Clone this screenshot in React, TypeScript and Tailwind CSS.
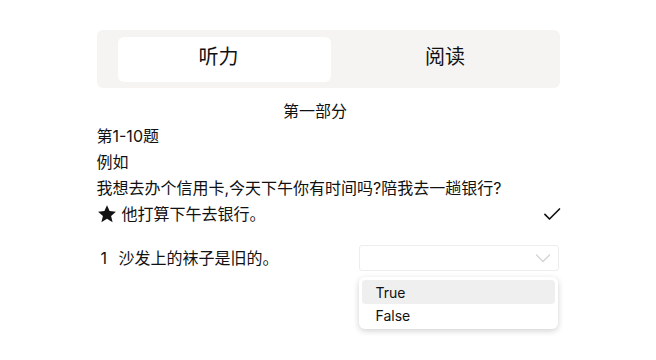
import React from "react";

const font = { fontFamily: 'Inter, "Noto Sans CJK SC", sans-serif' };

function StarIcon() {
  return (
    <svg width="20" height="20" viewBox="0 0 24 24" className="shrink-0">
      <path
        d="M12 1.5l3.1 7 7.6.7-5.8 5.1 1.8 7.5L12 17.8l-6.7 4 1.8-7.5-5.8-5.1 7.6-.7z"
        fill="#111"
      />
    </svg>
  );
}

function CheckIcon() {
  return (
    <svg width="20" height="20" viewBox="0 0 24 24" fill="none" stroke="#111" strokeWidth="2" strokeLinecap="round" strokeLinejoin="round">
      <path d="M3.5 12.5l5.5 5.5L21 6" />
    </svg>
  );
}

function Chevron() {
  return (
    <svg width="16" height="10" viewBox="0 0 16 10" fill="none" stroke="#d4d4d4" strokeWidth="1.4" strokeLinecap="round" strokeLinejoin="round">
      <path d="M1.5 2l6.5 6.5L14.5 2" />
    </svg>
  );
}

export default function App() {
  return (
    <div className="w-full min-h-[360px] bg-white text-[#111]" style={font}>
      <div className="mx-auto w-[463px] pt-[30px]">
        <div className="h-[58px] bg-[#f5f4f3] rounded-md pl-[21px] pt-[7px] pb-[6px] flex">
          <div className="w-[213px] bg-white rounded-md flex items-center justify-center text-[20px] pr-[11px] pb-[5px]">听力</div>
          <div className="flex-1 flex items-center justify-center text-[20px] pb-[5px]">阅读</div>
        </div>
        <div className="text-center text-[16px] leading-[20px] mt-[13px] pr-[26px]">第一部分</div>
        <div className="text-[16px] leading-[26px] mt-[2px]">
          <div>第1-10题</div>
          <div>例如</div>
          <div>我想去办个信用卡,今天下午你有时间吗?陪我去一趟银行?</div>
          <div className="flex items-center justify-between">
            <div className="flex items-center gap-[5px]">
              <StarIcon />
              <span>他打算下午去银行。</span>
            </div>
            <div className="mr-[-2px]"><CheckIcon /></div>
          </div>
        </div>
        <div className="flex items-center justify-between mt-[18px] text-[16px]">
          <div className="flex items-center pl-[4px]">
            <span className="w-[18px]">1</span>
            <span>沙发上的袜子是旧的。</span>
          </div>
          <div className="relative w-[200px] mr-[1px]">
            <div className="h-[26px] border border-[#ededed] rounded-[3px] flex items-center justify-end pr-[7px]">
              <Chevron />
            </div>
            <div className="absolute left-0 top-[32px] w-[199px] bg-white rounded-md shadow-[0_2px_6px_rgba(0,0,0,0.18)] pt-[3px] pb-[2px] px-[3px]">
              <div className="h-[24px] rounded-[4px] bg-[#efefef] flex items-center pl-[14px] text-[14px]">True</div>
              <div className="h-[23px] flex items-center pl-[14px] text-[14px]">False</div>
            </div>
          </div>
        </div>
      </div>
    </div>
  );
}
